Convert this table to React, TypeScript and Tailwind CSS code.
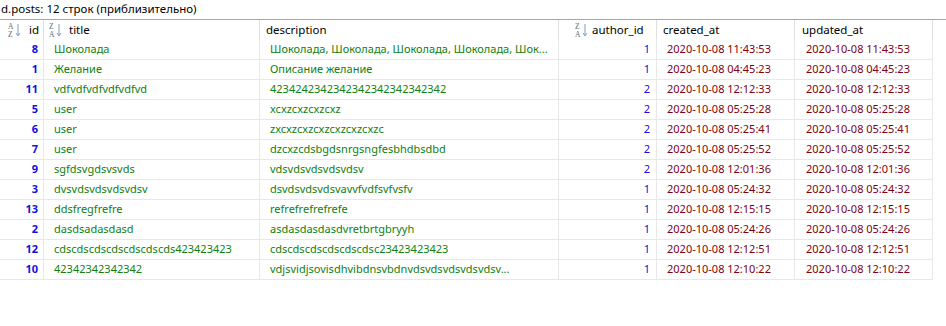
import React from "react";

type Row = [string, string, string, string, string];

const rows: Row[] = [
  ["8", "Шоколада", "Шоколада, Шоколада, Шоколада, Шоколада, Шок...", "1", "2020-10-08 11:43:53"],
  ["1", "Желание", "Описание желание", "1", "2020-10-08 04:45:23"],
  ["11", "vdfvdfvdfvdfvdfvd", "4234242342342342342342342342", "2", "2020-10-08 12:12:33"],
  ["5", "user", "xcxzcxzcxzcxz", "2", "2020-10-08 05:25:28"],
  ["6", "user", "zxcxzcxzcxzcxzcxzcxzc", "2", "2020-10-08 05:25:41"],
  ["7", "user", "dzcxzcdsbgdsnrgsngfesbhdbsdbd", "2", "2020-10-08 05:25:52"],
  ["9", "sgfdsvgdsvsvds", "vdsvdsvdsvdsvdsv", "2", "2020-10-08 12:01:36"],
  ["3", "dvsvdsvdsvdsvdsv", "dsvdsvdsvdsvavvfvdfsvfvsfv", "1", "2020-10-08 05:24:32"],
  ["13", "ddsfregfrefre", "refrefrefrefrefe", "1", "2020-10-08 12:15:15"],
  ["2", "dasdsadasdasd", "asdasdasdasdvretbrtgbryyh", "1", "2020-10-08 05:24:26"],
  ["12", "cdscdscdscdscdscdscds423423423", "cdscdscdscdscdscdsc23423423423", "1", "2020-10-08 12:12:51"],
  ["10", "42342342342342", "vdjsvidjsovisdhvibdnsvbdnvdsvdsvdsvdsvdsv...", "1", "2020-10-08 12:10:22"],
];

function SortIcon({ top, bottom }: { top: string; bottom: string }) {
  return (
    <svg width="13" height="16" viewBox="0 0 13 16" className="shrink-0">
      <text x="0" y="7" fontSize="7.5" fontFamily="Liberation Serif, serif" fill="#5f6670">
        {top}
      </text>
      <text x="0" y="15" fontSize="7.5" fontFamily="Liberation Serif, serif" fill="#5f6670">
        {bottom}
      </text>
      <line x1="10" y1="2" x2="10" y2="13" stroke="#7f9cc6" strokeWidth="1" />
      <path d="M8 11 L10 14 L12 11" fill="none" stroke="#7f9cc6" strokeWidth="1" />
    </svg>
  );
}

export default function App() {
  return (
    <div
      className="w-[946px] h-[326px] bg-white text-[11px] text-black overflow-hidden"
      style={{ fontFamily: '"Noto Sans", "Open Sans", sans-serif' }}
    >
      <div className="h-[19px] leading-[17px] text-[11.5px] pl-[1px] whitespace-nowrap">d.posts: 12 строк (приблизительно)</div>
      <div className="border-t border-[#a8a8a8] w-[946px]">
        {/* header */}
        <div className="flex h-[20px] items-center text-[11.5px]">
          <div className="w-[44px] h-full border-r border-[#e0e0e0] flex items-center pl-[8px] gap-[8px]">
            <SortIcon top="A" bottom="Z" />
            <span>id</span>
          </div>
          <div className="w-[216px] h-full border-r border-[#e0e0e0] flex items-center pl-[5px] gap-[7px]">
            <SortIcon top="Z" bottom="A" />
            <span>title</span>
          </div>
          <div className="w-[299px] h-full border-r border-[#e0e0e0] flex items-center pl-[6px]">description</div>
          <div className="w-[98px] h-full border-r border-[#e0e0e0] flex items-center pl-[16px] gap-[4px]">
            <SortIcon top="Z" bottom="A" />
            <span>author_id</span>
          </div>
          <div className="w-[138px] h-full border-r border-[#e0e0e0] flex items-center pl-[6px]">created_at</div>
          <div className="w-[138px] h-full border-r border-[#e0e0e0] flex items-center pl-[7px]">updated_at</div>
        </div>
        {rows.map((r, i) => (
          <div key={i} className="flex h-[20px] items-center whitespace-nowrap">
            <div className="w-[44px] h-full border-r border-b border-[#e8e8e8] flex items-center justify-end pr-[5px] font-bold text-[#1010e0]">
              {r[0]}
            </div>
            <div className="w-[216px] h-full border-r border-b border-[#e8e8e8] flex items-center pl-[10px] text-[#108010] overflow-hidden">
              {r[1]}
            </div>
            <div className="w-[299px] h-full border-r border-b border-[#e8e8e8] flex items-center pl-[10px] text-[#108010] overflow-hidden">
              {r[2]}
            </div>
            <div className="w-[98px] h-full border-r border-b border-[#e8e8e8] flex items-center justify-end pr-[6px] text-[#1010e0]">
              {r[3]}
            </div>
            <div className="w-[138px] h-full border-r border-b border-[#e8e8e8] flex items-center pl-[10px] text-[#800010]">
              {r[4]}
            </div>
            <div className="w-[138px] h-full border-r border-b border-[#e8e8e8] flex items-center pl-[11px] text-[#800010]">
              {r[4]}
            </div>
          </div>
        ))}
      </div>
    </div>
  );
}
